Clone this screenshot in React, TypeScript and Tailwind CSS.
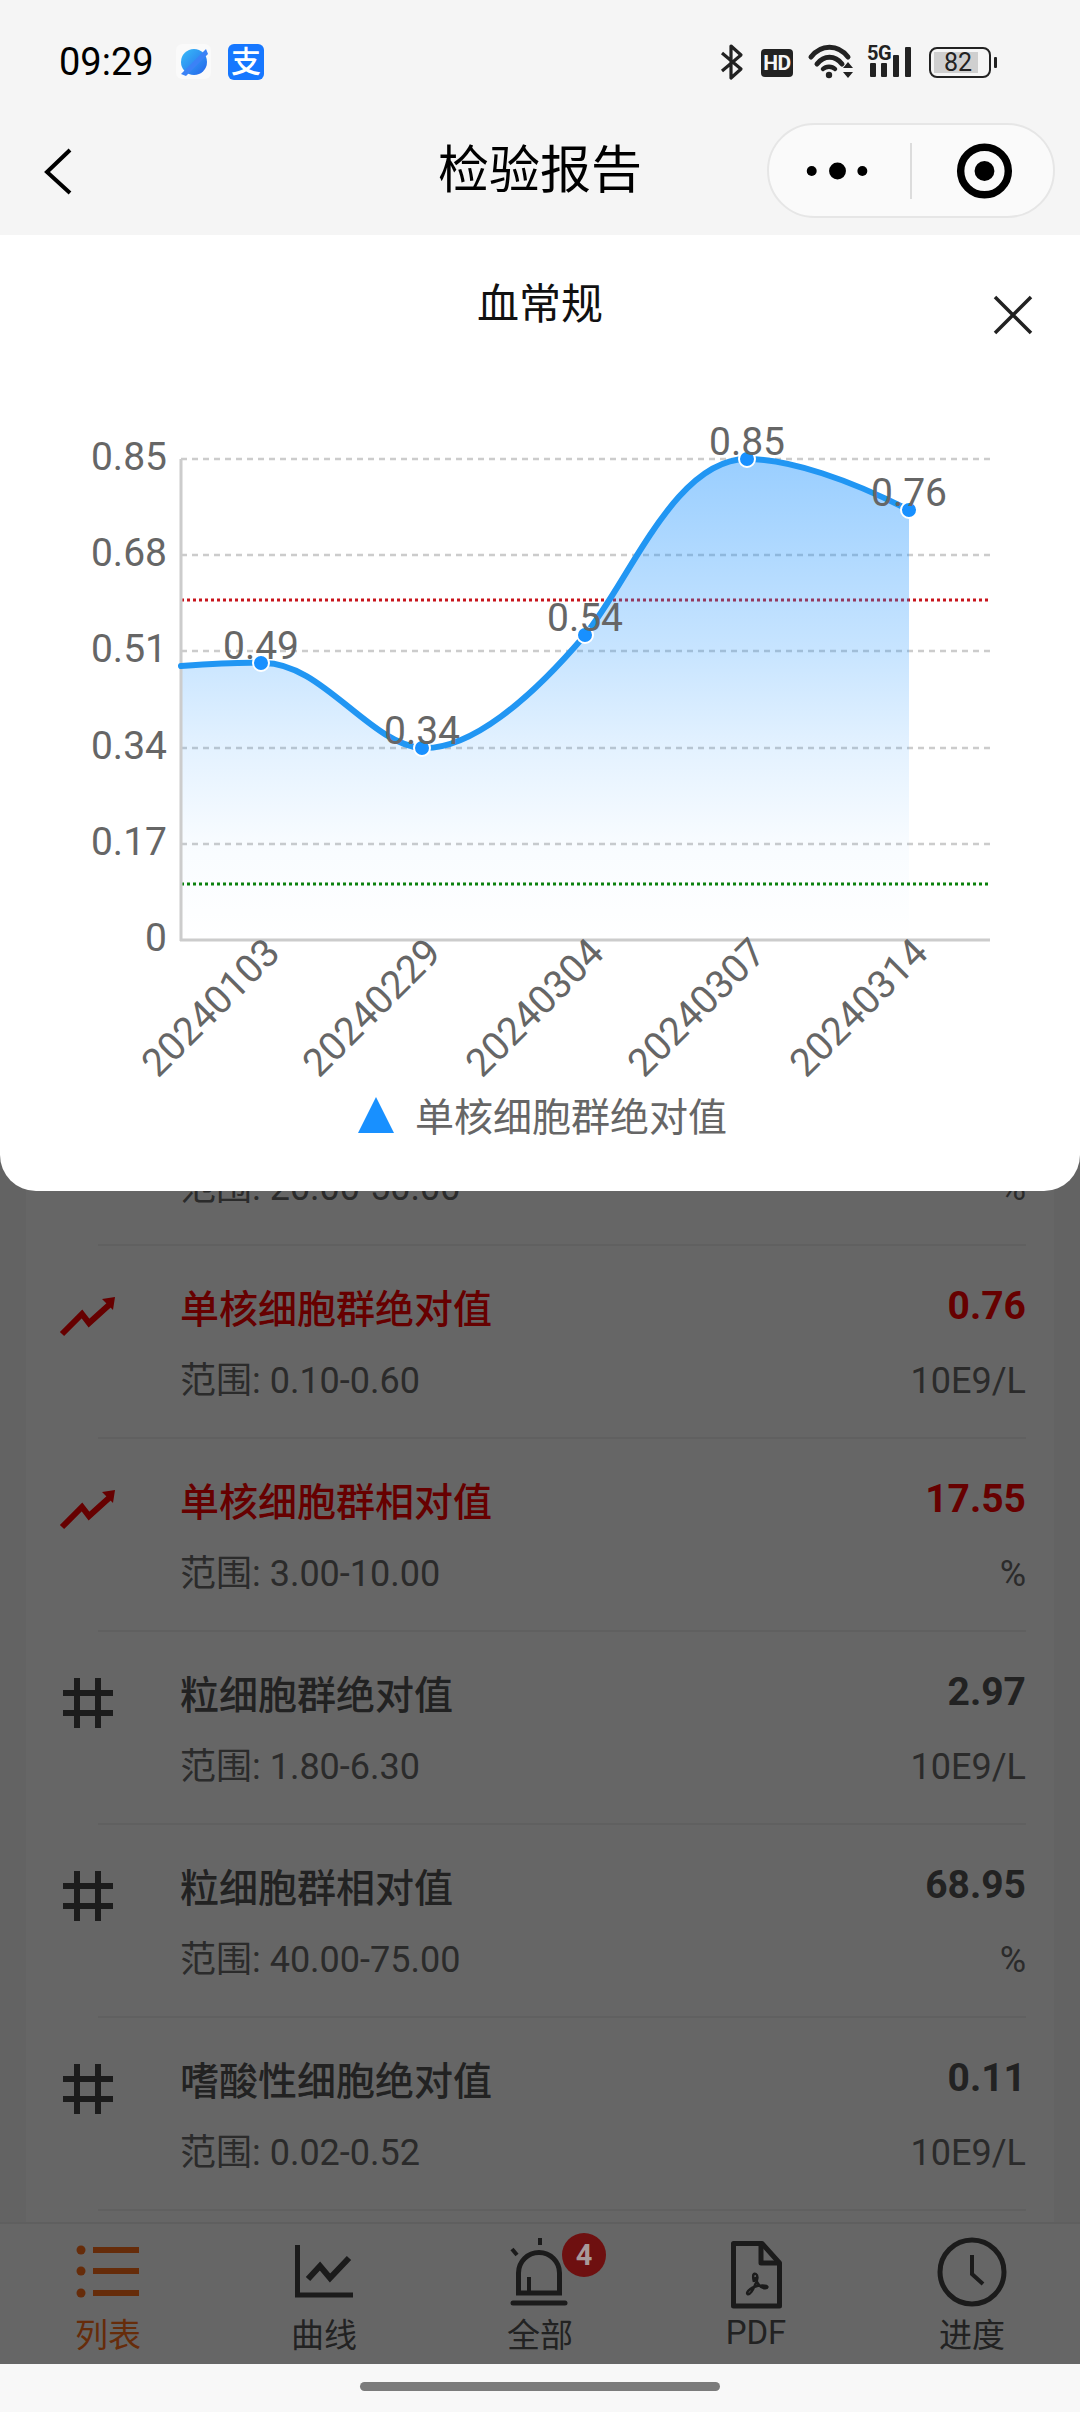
import React from 'react';

const rows = [
  { name: '淋巴细胞群相对值', range: '20.00-50.00', value: '35.00', unit: '%', high: false },
  { name: '单核细胞群绝对值', range: '0.10-0.60', value: '0.76', unit: '10E9/L', high: true },
  { name: '单核细胞群相对值', range: '3.00-10.00', value: '17.55', unit: '%', high: true },
  { name: '粒细胞群绝对值', range: '1.80-6.30', value: '2.97', unit: '10E9/L', high: false },
  { name: '粒细胞群相对值', range: '40.00-75.00', value: '68.95', unit: '%', high: false },
  { name: '嗜酸性细胞绝对值', range: '0.02-0.52', value: '0.11', unit: '10E9/L', high: false },
];

const points = [
  { x: 261, y: 663, label: '0.49', date: '20240103' },
  { x: 422, y: 748, label: '0.34', date: '20240229' },
  { x: 585, y: 635, label: '0.54', date: '20240304' },
  { x: 747, y: 459, label: '0.85', date: '20240307' },
  { x: 909, y: 510, label: '0.76', date: '20240314' },
];

const grid = [
  { y: 459, label: '0.85' },
  { y: 555, label: '0.68' },
  { y: 651, label: '0.51' },
  { y: 748, label: '0.34' },
  { y: 844, label: '0.17' },
];

const curve =
  'M181 666 C 210 664 240 662 261 663 C 320 660 370 745 422 748 C 470 750 530 700 585 635 C 630 580 675 459 747 459 C 790 459 850 480 909 510';

const StatusIcons = () => (
  <svg width="290" height="40" viewBox="0 0 290 40" fill="none">
    {/* bluetooth */}
    <path d="M4 11 L23 27 L13 36 V4 L23 13 L4 29" stroke="#222" strokeWidth="3.2" strokeLinejoin="round" />
    {/* hd */}
    <rect x="43" y="7" width="32" height="28" rx="4" fill="#222" />
    <text x="59" y="28" textAnchor="middle" fontSize="21" fontWeight="700" fill="#f5f5f5" letterSpacing="-0.5">HD</text>
    {/* wifi */}
    <path d="M93 15 C 103 2 120 2 130 15" stroke="#222" strokeWidth="5" strokeLinecap="round" />
    <path d="M99 22 C 106 13 117 13 124 22" stroke="#222" strokeWidth="5" strokeLinecap="round" />
    <path d="M105 27 C 108 24 114 24 117 27" stroke="#222" strokeWidth="4.5" strokeLinecap="round" />
    <circle cx="111" cy="33" r="3.2" fill="#222" />
    <path d="M125 26 L130 20 L135 26 Z M125 30 H135 L130 36 Z" fill="#222" />
    {/* 5g + signal */}
    <text x="149" y="18" fontSize="20" fontWeight="700" fill="#222" letterSpacing="-0.5">5G</text>
    <rect x="152" y="21" width="6" height="14" rx="1" fill="#222" />
    <rect x="163" y="21" width="6" height="14" rx="1" fill="#222" />
    <rect x="175" y="13" width="6" height="22" rx="1" fill="#222" />
    <rect x="187" y="5" width="6" height="30" rx="1" fill="#222" />
    {/* battery */}
    <rect x="212" y="6" width="60" height="29" rx="7" stroke="#222" strokeWidth="2" />
    <rect x="216" y="10" width="44" height="21" fill="#cfcfcf" />
    <text x="240" y="29" textAnchor="middle" fontSize="25" fill="#222">82</text>
    <rect x="276" y="15" width="3" height="11" rx="1" fill="#222" />
  </svg>
);

const TrendIcon = () => (
  <svg width="50" height="50" viewBox="0 0 50 50" fill="none" className="overflow-visible">
    <path d="M-1 42 L19 22 L26 31 L46 13" stroke="#ff0000" strokeWidth="6" />
    <path d="M52 5 L39 7 L50 18 Z" fill="#ff0000" />
  </svg>
);

const HashIcon = () => (
  <svg width="50" height="50" viewBox="0 0 50 50" fill="#464646">
    <rect x="11" y="0" width="6" height="50" />
    <rect x="32" y="0" width="6" height="50" />
    <rect x="0" y="12" width="50" height="6" />
    <rect x="0" y="32" width="50" height="6" />
  </svg>
);

const Chart = () => (
  <svg width="1080" height="705" viewBox="0 385 1080 705" fill="none" className="block">
    <defs>
      <linearGradient id="areaFill" gradientUnits="userSpaceOnUse" x1="0" y1="459" x2="0" y2="940">
        <stop offset="0" stopColor="#1890ff" stopOpacity="0.44" />
        <stop offset="0.4" stopColor="#1890ff" stopOpacity="0.24" />
        <stop offset="0.6" stopColor="#1890ff" stopOpacity="0.12" />
        <stop offset="0.8" stopColor="#1890ff" stopOpacity="0.03" />
        <stop offset="1" stopColor="#1890ff" stopOpacity="0" />
      </linearGradient>
    </defs>
    {grid.map((g) => (
      <line key={g.y} x1="181" x2="990" y1={g.y} y2={g.y} stroke="#cccccc" strokeWidth="2.5" strokeDasharray="6 5" />
    ))}
    <line x1="181" x2="990" y1="600" y2="600" stroke="#c8141c" strokeWidth="3" strokeDasharray="3 3" />
    <line x1="181" x2="990" y1="884" y2="884" stroke="#0a800a" strokeWidth="3" strokeDasharray="3 3" />
    <path d={curve + ' V940 H181 Z'} fill="url(#areaFill)" />
    <line x1="181" x2="181" y1="459" y2="941" stroke="#cccccc" strokeWidth="3" />
    <line x1="180" x2="990" y1="940" y2="940" stroke="#cccccc" strokeWidth="3" />
    <path d={curve} stroke="#2196f3" strokeWidth="6" strokeLinecap="round" />
    {grid.map((g) => (
      <text key={g.label} x="167" y={g.y + 11} textAnchor="end" fontSize="39" fill="#666666">{g.label}</text>
    ))}
    <text x="167" y="951" textAnchor="end" fontSize="39" fill="#666666">0</text>
    {points.map((p) => (
      <g key={p.date}>
        <circle cx={p.x} cy={p.y} r="8" fill="#1890ff" stroke="#ffffff" strokeWidth="2" />
        <text x={p.x} y={p.y - 4} textAnchor="middle" fontSize="39" fill="#666666">{p.label}</text>
        <text
          x={p.x + 21}
          y={955}
          textAnchor="end"
          fontSize="39"
          fill="#666666"
          transform={`rotate(-45 ${p.x + 21} 955)`}
        >
          {p.date}
        </text>
      </g>
    ))}
  </svg>
);

const tabs = [
  {
    label: '列表',
    active: true,
    icon: (
      <svg width="72" height="80" viewBox="0 0 72 80" fill="#ff6e19">
        <circle cx="9" cy="14" r="4.5" />
        <circle cx="9" cy="35" r="4.5" />
        <circle cx="9" cy="57" r="4.5" />
        <rect x="21" y="11" width="46" height="6" />
        <rect x="21" y="32" width="46" height="6" />
        <rect x="21" y="54" width="46" height="6" />
      </svg>
    ),
  },
  {
    label: '曲线',
    icon: (
      <svg width="72" height="80" viewBox="0 0 72 80" fill="none" stroke="#444444">
        <path d="M9.5 9 V59 H65" strokeWidth="5" />
        <path d="M20 43 L32 30 L42 42 L61 22" strokeWidth="6" />
      </svg>
    ),
  },
  {
    label: '全部',
    badge: '4',
    icon: (
      <svg width="72" height="80" viewBox="0 0 72 80" fill="none" stroke="#444444" strokeWidth="5">
        <path d="M14.5 57 V37 a20.5 20.5 0 0 1 41 0 V57 Z" />
        <path d="M25 41 V57" strokeWidth="4" />
        <path d="M9 67 H61" strokeLinecap="round" />
        <path d="M8 13 L13 19" strokeWidth="4" />
        <path d="M36 2 V9" strokeWidth="4" />
      </svg>
    ),
  },
  {
    label: 'PDF',
    icon: (
      <svg width="72" height="80" viewBox="0 0 72 80" fill="none" stroke="#444444" strokeWidth="5" strokeLinejoin="round">
        <path d="M13.5 7.5 H42 L59.5 27 V70 H13.5 Z" />
        <path d="M41 8 V27 H59" />
        <path
          d="M34 46 C 32 38 34 37 36 38 C 38 39 38 44 35 49 C 33 54 30 59 27.5 58 C 26 57 29 53 34 51 C 39 49 47 49 47.5 51 C 47 53 42 53 39 49 C 37 47 36 44 35 41"
          strokeWidth="2.5"
        />
      </svg>
    ),
  },
  {
    label: '进度',
    icon: (
      <svg width="72" height="80" viewBox="0 0 72 80" fill="none" stroke="#444444">
        <circle cx="36" cy="36" r="32" strokeWidth="5" />
        <path d="M36 19 V38 L47 48" strokeWidth="4" />
      </svg>
    ),
  },
];

export default function App() {
  return (
    <div className="relative w-[1080px] h-[2412px] overflow-hidden flex flex-col bg-[#f5f5f5] font-['Roboto','Noto_Sans_CJK_SC',sans-serif]">
      {/* Status bar + nav */}
      <div className="h-[235px] shrink-0 bg-[#f5f5f5]">
        <div className="h-[123px] flex items-center pl-[59px] pr-[72px]">
          <span className="text-[38px] leading-none text-black w-[117px]">09:29</span>
          <div className="w-[35px] h-[35px] mr-[17px] flex items-center justify-center rounded-[6px] bg-[#fafafa]">
            <svg width="30" height="30" viewBox="0 0 30 30">
              <defs>
                <linearGradient id="planet" x1="0" y1="0" x2="1" y2="1">
                  <stop offset="0" stopColor="#38bdf8" />
                  <stop offset="1" stopColor="#2563eb" />
                </linearGradient>
              </defs>
              <circle cx="15" cy="15" r="13" fill="url(#planet)" />
              <path d="M2 27 L27 2 L29 7 L7 29 Z" fill="#3b82f6" />
            </svg>
          </div>
          <div className="w-[36px] h-[36px] rounded-[6px] bg-[#1677ff] flex items-center justify-center text-[30px] leading-none font-medium text-white">
            支
          </div>
          <div className="ml-auto">
            <StatusIcons />
          </div>
        </div>
        <div className="relative h-[95px] flex items-center pr-[25px]">
          <div className="absolute inset-x-0 text-center text-[51px] leading-none text-black">检验报告</div>
          <svg width="30" height="48" viewBox="0 0 30 48" fill="none" className="ml-[43px]">
            <path d="M27 3 L4 25 L27 46" stroke="#000000" strokeWidth="4" />
          </svg>
          <div className="relative ml-auto w-[288px] h-[95px] rounded-full border-2 border-[#e6e6e6] bg-[#fafafa] flex items-center">
            <svg width="142" height="40" viewBox="0 0 142 40" fill="#000000">
              <circle cx="43" cy="20" r="5" />
              <circle cx="69" cy="20" r="8.5" />
              <circle cx="94" cy="20" r="5" />
            </svg>
            <div className="w-[2px] h-[56px] bg-[#dcdcdc]" />
            <svg width="142" height="64" viewBox="0 0 142 64" fill="none">
              <circle cx="73" cy="32" r="24" stroke="#000000" strokeWidth="7.5" />
              <circle cx="73" cy="32" r="10" fill="#000000" />
            </svg>
          </div>
        </div>
      </div>

      {/* List under the mask */}
      <div className="flex-1 min-h-0 overflow-hidden bg-[#f8f8f8]">
        <div className="mx-[26px] h-full bg-white pt-[818px] pl-[72px] pr-[28px]">
          {rows.map((r) => (
            <div key={r.name} className="h-[193px] border-b-2 border-[#f0f0f0] flex">
              <div className="-ml-[35px] w-[117px] shrink-0 pt-[46px]">
                {r.high ? <TrendIcon /> : <HashIcon />}
              </div>
              <div className="flex-1 flex justify-between">
                <div>
                  <div className={`mt-[36px] text-[39px] leading-[56px] font-medium ${r.high ? 'text-[#ff0000]' : 'text-[#555555]'}`}>
                    {r.name}
                  </div>
                  <div className="mt-[18px] text-[36px] leading-[50px] text-[#6b6b6b]">范围: {r.range}</div>
                </div>
                <div className="text-right">
                  <div className={`mt-[32px] text-[39px] leading-[56px] font-bold ${r.high ? 'text-[#ff0000]' : 'text-[#555555]'}`}>
                    {r.value}
                  </div>
                  <div className="mt-[22px] text-[36px] leading-[50px] text-[#6b6b6b]">{r.unit}</div>
                </div>
              </div>
            </div>
          ))}
        </div>
      </div>

      {/* Tab bar */}
      <div className="h-[142px] shrink-0 bg-white border-t-2 border-[#eeeeee] pt-[12px] grid grid-cols-5">
        {tabs.map((t) => (
          <div key={t.label} className="flex flex-col items-center">
            <div className="relative w-[72px] h-[80px]">
              {t.icon}
              {t.badge && (
                <span className="absolute z-[15] left-[58px] -top-[3px] w-[44px] h-[44px] rounded-full bg-[#6e1010] flex items-center justify-center text-[29px] leading-none font-bold text-[#a89a9a]">
                  {t.badge}
                </span>
              )}
            </div>
            <span
              className={`text-[33px] leading-[40px] ${t.active ? 'text-[#ff6e19]' : 'text-[#555555]'} ${t.label === 'PDF' ? '-mt-[3px]' : ''}`}
            >
              {t.label}
            </span>
          </div>
        ))}
      </div>

      {/* Home indicator */}
      <div className="h-[48px] shrink-0 bg-[#f8f8f8] flex justify-center pt-[18px]">
        <div className="w-[360px] h-[9px] rounded-full bg-[#7b7b7b]" />
      </div>

      {/* Mask */}
      <div className="absolute inset-x-0 top-[235px] bottom-[48px] z-10 bg-black/60" />

      {/* Chart sheet */}
      <div className="absolute inset-x-0 top-[235px] z-20 h-[956px] bg-white rounded-b-[36px]">
        <div className="relative h-[150px] pt-[44px] text-center text-[42px] leading-[52px] text-[#111111]">
          血常规
          <svg width="40" height="40" viewBox="0 0 40 40" fill="none" className="absolute right-[47px] top-[60px]">
            <path d="M2 2 L38 38 M38 2 L2 38" stroke="#222222" strokeWidth="3.5" />
          </svg>
        </div>
        <Chart />
        <div className="pl-[5px] flex items-center justify-center gap-[21px]">
          <svg width="36" height="36" viewBox="0 0 36 36" className="-mt-[6px]">
            <path d="M18 0 L36 36 H0 Z" fill="#1890ff" />
          </svg>
          <span className="text-[39px] leading-[56px] text-[#666666]">单核细胞群绝对值</span>
        </div>
      </div>
    </div>
  );
}
